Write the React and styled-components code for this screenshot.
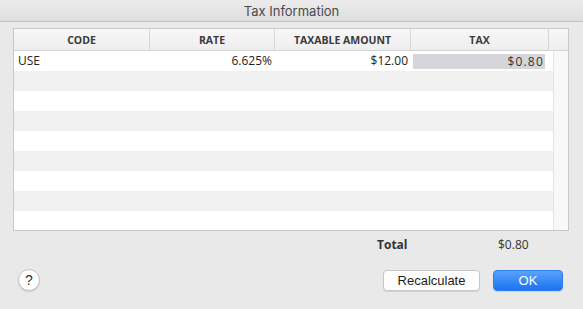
import React from "react";
import styled, { createGlobalStyle } from "styled-components";

const Global = createGlobalStyle`
  html, body { margin: 0; padding: 0; background: #e8e8e8; }
  body { width: 583px; height: 309px; overflow: hidden; font-family: "DejaVu Sans", sans-serif; }
`;

const Window = styled.div`
  width: 583px;
  height: 309px;
  background: #e9e9e9;
  display: flex;
  flex-direction: column;
`;

const TitleBar = styled.div`
  height: 22px;
  box-sizing: border-box;
  border-bottom: 1px solid #c2c2c2;
  background: linear-gradient(#ececec, #dedede);
  display: flex;
  align-items: center;
  justify-content: center;
  font-family: "Inter", "Roboto", sans-serif;
  font-size: 13px;
  color: #4a4a4a;
  padding-top: 1px;
`;

const Body = styled.div`
  padding: 6px 14px 0 13px;
  display: flex;
  flex-direction: column;
`;

const Table = styled.div`
  width: 556px;
  height: 203px;
  box-sizing: border-box;
  border: 1px solid #c8c8c8;
  background: #fff;
  display: flex;
  flex-direction: column;
  overflow: hidden;
`;

const cols = "136px 125px 136px 138px 1fr";

const HeaderRow = styled.div`
  display: grid;
  grid-template-columns: ${cols};
  flex: 0 0 22px;
  min-height: 0;
  box-sizing: border-box;
  border-bottom: 1px solid #d4d4d4;
  background: linear-gradient(#f7f7f7, #eeeeee);
`;

const HeaderCell = styled.div`
  display: flex;
  align-items: center;
  justify-content: center;
  font-family: "Open Sans", "DejaVu Sans", sans-serif;
  font-weight: 700;
  font-size: 10.5px;
  color: #3a3a3a;
  border-right: ${(p) => (p.$last ? "none" : "1px solid #d6d6d6")};
  padding-top: 1px;
`;

const Row = styled.div`
  display: grid;
  grid-template-columns: ${cols};
  flex: 0 0 20px;
  height: 20px;
  min-height: 0;
  overflow: hidden;
  background: ${(p) => (p.$alt ? "#f0f0f0" : "#ffffff")};
`;

const Cell = styled.div`
  display: flex;
  align-items: center;
  justify-content: ${(p) => (p.$right ? "flex-end" : "flex-start")};
  padding: 0 ${(p) => (p.$right ? "3px" : "4px")};
  font-family: "Open Sans", "DejaVu Sans", sans-serif;
  font-size: 12px;
  line-height: 16px;
  color: #222;
`;

const TaxCell = styled.div`
  display: flex;
  align-items: center;
  justify-content: flex-end;
  height: 15px;
  margin: 3px 4px 2px 2px;
  padding-right: 1px;
  background: #d6d6da;
  font-family: "Open Sans", "DejaVu Sans", sans-serif;
  font-weight: 400;
  font-size: 12px;
  line-height: 15px;
  letter-spacing: 1.2px;
  color: #333;
`;

const Scroller = styled.div`
  border-left: 1px solid #e4e4e4;
  background: #f8f8f8;
  margin-left: 4px;
`;

const TotalRow = styled.div`
  display: flex;
  height: 27px;
  align-items: center;
  font-family: "Open Sans", "DejaVu Sans", sans-serif;
  font-size: 12px;
  color: #333;
`;

const TotalLabel = styled.span`
  font-weight: 700;
  margin-left: 364px;
  width: 121px;
`;

const Footer = styled.div`
  display: flex;
  align-items: center;
  padding: 11px 20px 0 18px;
`;

const HelpButton = styled.button`
  width: 22px;
  height: 22px;
  border-radius: 50%;
  border: 1px solid #c4c4c4;
  background: #fff;
  box-shadow: 0 1px 1px rgba(0, 0, 0, 0.12);
  display: flex;
  align-items: center;
  justify-content: center;
  padding: 0;
  font-family: "Liberation Sans", sans-serif;
  font-size: 14px;
  color: #333;
`;

const Spacer = styled.div`
  flex: 1;
`;

const Button = styled.button`
  height: 21px;
  width: ${(p) => p.$w}px;
  box-sizing: border-box;
  border-radius: 4px;
  font-family: "Liberation Sans", "Roboto", sans-serif;
  font-size: 13px;
  padding: 0;
  margin-left: ${(p) => p.$ml || 0}px;
  border: 1px solid ${(p) => (p.$primary ? "#2b7ff0" : "#c6c6c6")};
  background: ${(p) => (p.$primary ? "linear-gradient(#5aa2fb, #1b72f2)" : "#fff")};
  color: ${(p) => (p.$primary ? "#fff" : "#1d1d1d")};
  box-shadow: 0 1px 1px rgba(0, 0, 0, 0.1);
`;

export default function App() {
  const rows = Array.from({ length: 9 }, (_, i) => i);
  return (
    <Window>
      <Global />
      <TitleBar>Tax Information</TitleBar>
      <Body>
        <Table>
          <HeaderRow>
            <HeaderCell>CODE</HeaderCell>
            <HeaderCell>RATE</HeaderCell>
            <HeaderCell>TAXABLE AMOUNT</HeaderCell>
            <HeaderCell>TAX</HeaderCell>
            <HeaderCell $last />
          </HeaderRow>
          {rows.map((i) =>
            i === 0 ? (
              <Row key={i}>
                <Cell>USE</Cell>
                <Cell $right>6.625%</Cell>
                <Cell $right>$12.00</Cell>
                <TaxCell>$0.80</TaxCell>
                <Scroller />
              </Row>
            ) : (
              <Row key={i} $alt={i % 2 === 1}>
                <Cell />
                <Cell />
                <Cell />
                <Cell />
                <Scroller />
              </Row>
            )
          )}
        </Table>
        <TotalRow>
          <TotalLabel>Total</TotalLabel>
          <span>$0.80</span>
        </TotalRow>
      </Body>
      <Footer>
        <HelpButton>?</HelpButton>
        <Spacer />
        <Button $w={97}>Recalculate</Button>
        <Button $w={70} $ml={13} $primary>
          OK
        </Button>
      </Footer>
    </Window>
  );
}
